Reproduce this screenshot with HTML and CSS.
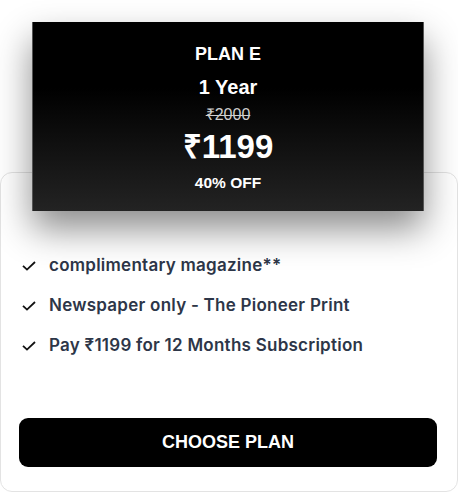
FILE: index.html
```html
<!DOCTYPE html>
<html lang="en">
<head>
  <meta charset="UTF-8" />
  <meta name="viewport" content="width=device-width, initial-scale=1.0"/>
  <title>Plan E</title>
  <link rel="stylesheet" href="styles.css">
</head>
<body>
  <div class="plan">
    <div class="plan-head">
      <div class="plan-name">PLAN E</div>
      <div class="plan-term">1 Year</div>
      <div class="plan-old">₹2000</div>
      <div class="plan-price">₹1199</div>
      <div class="plan-off">40% OFF</div>
    </div>

    <div class="plan-card">
      <ul class="features">
        <li>
          <svg class="tick" width="14" height="10" viewBox="0 0 14 10"><path d="M1 4.8 L5 8.6 L13 1" fill="none" stroke="#111" stroke-width="1.8"/></svg>
          complimentary magazine**
        </li>
        <li>
          <svg class="tick" width="14" height="10" viewBox="0 0 14 10"><path d="M1 4.8 L5 8.6 L13 1" fill="none" stroke="#111" stroke-width="1.8"/></svg>
          Newspaper only - The Pioneer Print
        </li>
        <li>
          <svg class="tick" width="14" height="10" viewBox="0 0 14 10"><path d="M1 4.8 L5 8.6 L13 1" fill="none" stroke="#111" stroke-width="1.8"/></svg>
          Pay ₹1199 for 12 Months Subscription
        </li>
      </ul>

      <button class="choose">CHOOSE PLAN</button>
    </div>
  </div>
</body>
</html>
```

FILE: styles.css
```css
body {
  margin: 0;
  background-color: #ffffff;
  font-family: Inter, "Noto Sans", sans-serif;
}

.plan {
  width: 458px;
  padding-top: 22px;
}

.plan-head {
  position: relative;
  z-index: 2;
  width: 392px;
  margin: 0 0 -39px 32px;
  padding: 21px 0 19px 0;
  box-sizing: border-box;
  height: 189px;
  background: linear-gradient(#000000 35%, #232323);
  border-left: 1px solid #555;
  border-right: 1px solid #555;
  box-shadow: 0 18px 34px rgba(0, 0, 0, 0.45);
  color: #ffffff;
  text-align: center;
  font-family: "Liberation Sans", Arial, sans-serif;
  font-weight: bold;
}

.plan-name {
  font-size: 18px;
  line-height: 22px;
}

.plan-term {
  font-size: 20px;
  line-height: 24px;
  margin-top: 10px;
}

.plan-old {
  font-size: 16px;
  line-height: 18px;
  margin-top: 7px;
  font-weight: normal;
  color: #cfcfcf;
  text-decoration: line-through;
}

.plan-price {
  font-size: 33px;
  line-height: 34px;
  margin-top: 6px;
}

.plan-off {
  font-size: 15.5px;
  line-height: 18px;
  margin-top: 10px;
}

.plan-card {
  background-color: #ffffff;
  border: 1px solid #e3e3e3;
  border-radius: 12px;
  height: 320px;
  box-sizing: border-box;
  padding: 72px 20px 0 18px;
}

.features {
  list-style: none;
  margin: 0;
  padding: 0;
}

.features li {
  display: flex;
  align-items: center;
  height: 40px;
  font-size: 17px;
  font-weight: 600;
  letter-spacing: 0.25px;
  color: #2d3648;
}

.tick {
  margin: 2px 13px 0 3px;
  flex-shrink: 0;
}

.choose {
  display: block;
  width: 100%;
  height: 49px;
  margin-top: 53px;
  background-color: #000000;
  color: #ffffff;
  border: none;
  border-radius: 9px;
  font-family: "Liberation Sans", Arial, sans-serif;
  font-weight: bold;
  font-size: 18px;
  cursor: pointer;
}
```
